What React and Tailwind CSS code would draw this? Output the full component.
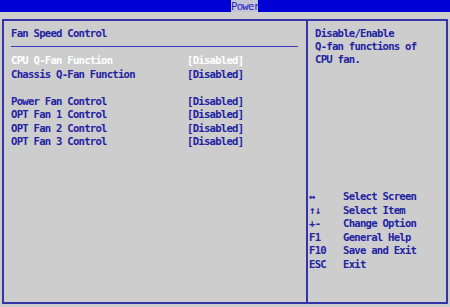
import React from "react";

const items = [
  { label: "CPU Q-Fan Function", value: "[Disabled]", selected: true },
  { label: "Chassis Q-Fan Function", value: "[Disabled]" },
  null,
  { label: "Power Fan Control", value: "[Disabled]" },
  { label: "OPT Fan 1 Control", value: "[Disabled]" },
  { label: "OPT Fan 2 Control", value: "[Disabled]" },
  { label: "OPT Fan 3 Control", value: "[Disabled]" },
];

const keys = [
  ["↔", "Select Screen"],
  ["↑↓", "Select Item"],
  ["+-", "Change Option"],
  ["F1", "General Help"],
  ["F10", "Save and Exit"],
  ["ESC", "Exit"],
];

export default function App() {
  return (
    <div
      className="w-[450px] h-[307px] bg-[#cdcdcd] text-[#2222a2] font-bold text-[10.6px] leading-[13.5px] tracking-[-0.75px] overflow-hidden"
      style={{ fontFamily: '"DejaVu Sans Mono", monospace' }}
    >
      <div className="h-[12px] bg-[#0000d6] pl-[231px] flex">
        <div className="w-[27px] h-full bg-[#c4c4d4] text-[#1a1ac4] leading-[12px] text-center font-normal">
          Power
        </div>
      </div>

      <div className="mt-[7px] mx-[2px] h-[285px] border-2 border-[#3434a8] flex">
        <div className="w-[302px] pt-[5.5px] pl-[7px]">
          <div>Fan Speed Control</div>
          <div className="mt-[6px] h-px w-[287px] bg-[#3a3ac4]" />
          <div className="mt-[7px]">
            {items.map((it, i) =>
              it ? (
                <div key={i} className={"flex " + (it.selected ? "text-white" : "")}>
                  <div className="w-[176px]">{it.label}</div>
                  <div>{it.value}</div>
                </div>
              ) : (
                <div key={i} className="h-[13.5px]" />
              )
            )}
          </div>
        </div>

        <div className="flex-1 border-l-2 border-[#3434a8] flex flex-col">
          <div className="pt-[5.5px] pl-[7px] leading-[13.3px]">
            <div>Disable/Enable</div>
            <div>Q-fan functions of</div>
            <div>CPU fan.</div>
          </div>
          <div className="mt-auto pb-[31px] pl-[1px]">
            {keys.map(([k, t]) => (
              <div key={t} className="flex">
                <div className="w-[34px]">{k}</div>
                <div>{t}</div>
              </div>
            ))}
          </div>
        </div>
      </div>
    </div>
  );
}
